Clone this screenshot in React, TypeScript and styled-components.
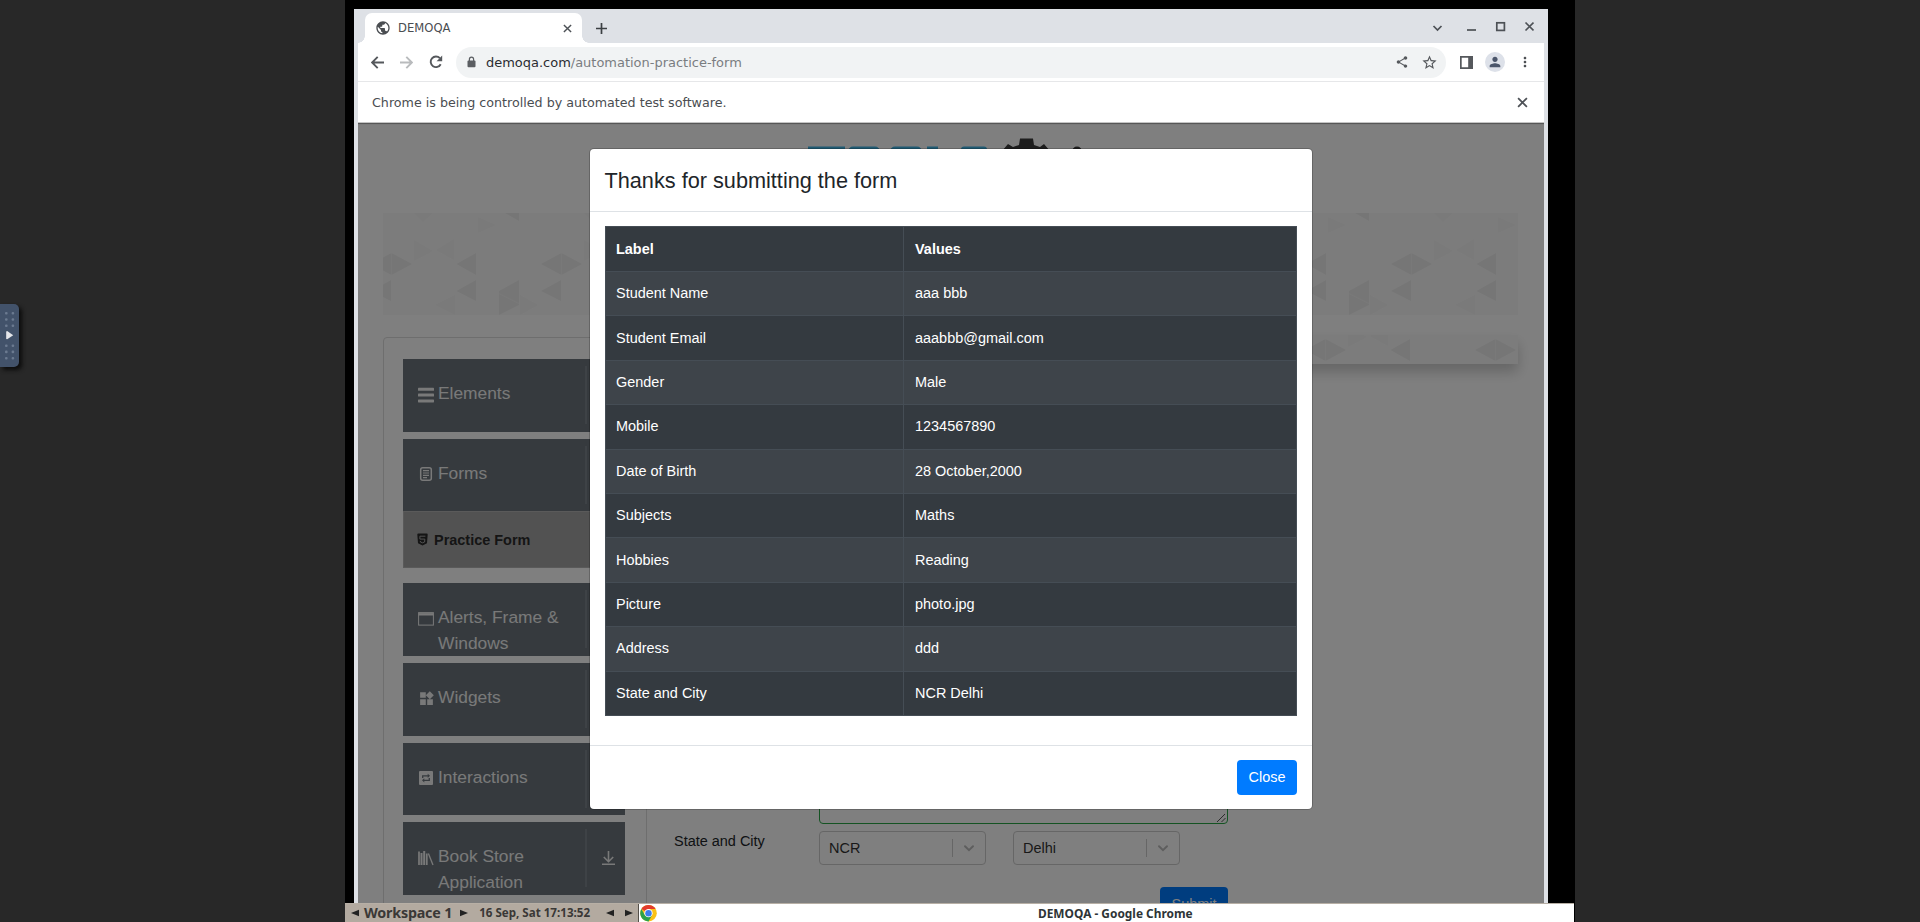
import React from "react";
import styled, { createGlobalStyle, css } from "styled-components";
import {
  MdShare,
  MdStarBorder,
  MdMoreVert,
  MdPerson,
  MdPublic,
  MdWidgets,
} from "react-icons/md";

const GlobalStyle = createGlobalStyle`
  *, *::before, *::after { box-sizing: border-box; }
  body { margin: 0; background: #282828; overflow: hidden; }
  svg { display: block; flex: none; }
`;

const sans = `"Liberation Sans", Arial, sans-serif`;
const uiSans = `"DejaVu Sans", sans-serif`;
const taskSans = `"Noto Sans", sans-serif`;

/* ---------- remote desktop frame ---------- */

const Viewer = styled.div`
  position: relative;
  width: 1920px;
  height: 922px;
  padding: 0 345px;
  background: #282828;
  overflow: hidden;
`;

const Desktop = styled.div`
  width: 1230px;
  height: 922px;
  background: #000;
  display: flex;
  flex-direction: column;
`;

const DockHandle = styled.div`
  position: absolute;
  left: 0;
  top: 304px;
  width: 19px;
  height: 63px;
  border-radius: 0 5px 5px 0;
  background: #42526a;
  box-shadow: 3px 3px 4px #0c0c0c;
`;

/* ---------- browser window ---------- */

const BrowserWindow = styled.div`
  width: 1194px;
  height: 894px;
  margin: 9px 0 0 9px;
  padding: 0 4px;
  background: #dee1e6;
  display: flex;
  flex-direction: column;
  color: #4a4d51;
`;

const TabStrip = styled.div`
  height: 34px;
  display: flex;
  align-items: flex-end;
  padding-left: 7px;
`;

const Tab = styled.div`
  position: relative;
  width: 217px;
  height: 30px;
  padding: 0 10px 0 10px;
  border-radius: 7px 7px 0 0;
  background: #fff;
  display: flex;
  align-items: center;
  gap: 7px;
  font: 11.6px ${uiSans};
  &::before,
  &::after {
    content: "";
    position: absolute;
    bottom: 0;
    width: 7px;
    height: 7px;
  }
  &::before {
    left: -7px;
    background: radial-gradient(circle at 0 0, transparent 6.5px, #fff 7px);
  }
  &::after {
    right: -7px;
    background: radial-gradient(circle at 100% 0, transparent 6.5px, #fff 7px);
  }
`;

const TabTitle = styled.span`
  flex: 1;
`;

const NewTab = styled.div`
  margin-left: 14px;
  height: 30px;
  display: flex;
  align-items: center;
  color: #3c4043;
`;

const WindowControls = styled.div`
  margin-left: auto;
  height: 34px;
  padding: 0 10px 0 0;
`;

const Toolbar = styled.div`
  height: 39px;
  padding: 0 11px 0 13px;
  background: #fff;
  border-bottom: 1px solid #e6e7e9;
  display: flex;
  align-items: center;
`;

const NavButton = styled.span<{ $muted?: boolean; $last?: boolean }>`
  width: ${(p) => (p.$last ? 27 : 29)}px;
  color: ${(p) => (p.$muted ? "#b9bbbd" : "#55585c")};
`;

const Omnibox = styled.div`
  width: 990px;
  height: 31px;
  padding: 0 8px 0 11px;
  border-radius: 16px;
  background: #f1f3f4;
  display: flex;
  align-items: center;
  font: 12.98px ${uiSans};
  color: #7a7d81;
`;

const Address = styled.span`
  flex: 1;
  margin-left: 10px;
  b {
    font-weight: 400;
    color: #2a2c30;
  }
`;

const ToolbarActions = styled.div`
  margin-left: auto;
  display: flex;
  align-items: center;
  gap: 12px;
`;

const Avatar = styled.span`
  width: 20px;
  height: 20px;
  border-radius: 50%;
  background: #dde1e9;
  color: #4b566b;
  display: flex;
  align-items: center;
  justify-content: center;
`;

const InfoBar = styled.div`
  height: 41px;
  padding: 0 16px 0 14px;
  background: #fff;
  border-bottom: 1px solid #c4c4c4;
  display: flex;
  align-items: center;
  justify-content: space-between;
  font: 12.68px ${uiSans};
`;

/* ---------- page ---------- */

const Page = styled.div`
  position: relative;
  flex: 1;
  overflow: hidden;
  background: #fff;
  font-family: ${sans};
  font-size: 14.46px;
  color: #212529;
`;

const Header = styled.div`
  height: 90px;
  padding: 15px 0 0 449px;
`;

const Banner = styled.div`
  width: 1135px;
  height: 102px;
  margin-left: 25px;
  background: #f9f9f9;
`;

const Columns = styled.div`
  display: flex;
  margin: 20px 0 0 25px;
`;

const Sidebar = styled.div`
  width: 264px;
  height: 640px;
  margin-top: 2px;
  padding: 21px 21px 0 19px;
  border: 1px solid #dcdcdc;
  border-radius: 4px;
`;

const Group = styled.div`
  height: 72.6px;
  margin-bottom: 7px;
  padding: 21px 0 0 15px;
  background: #6c757d;
  color: #f2f2f2;
  display: flex;
  font-size: 17.36px;
  line-height: 26px;
  overflow: hidden;
`;

const GroupIcon = styled.span`
  width: 20px;
  height: 29px;
  display: flex;
  align-items: center;
`;

const GroupLabel = styled.span`
  width: 147px;
`;

const GroupArrow = styled.span`
  width: 40px;
  height: 58px;
  margin: -14px 0 0;
  padding-left: 14px;
  border-left: 2px solid #7d858c;
  display: flex;
  align-items: center;
`;

const SubItem = styled.div`
  height: 57px;
  margin: -7px 0 15.3px;
  padding-left: 13px;
  background: #a5a5a5;
  border: 1px solid #b5b5b5;
  display: flex;
  align-items: center;
  gap: 6px;
  font-weight: 700;
  color: #2b2b2b;
`;

const Main = styled.div`
  flex: 1;
`;

const AdStrip = styled.div`
  width: 871px;
  height: 29px;
  background: #f9f9f9;
  box-shadow: 0 8px 13px rgba(0, 0, 0, 0.2);
  overflow: hidden;
`;

const Form = styled.div`
  padding: 0 0 0 27px;
  display: grid;
  grid-template-columns: 145px 409px;
`;

const AddressField = styled.div`
  grid-column: 2;
  height: 460px;
  border: 1px solid #28a745;
  border-radius: 4px;
  display: flex;
  align-items: flex-end;
  justify-content: flex-end;
  padding: 1px;
`;

const FieldLabel = styled.div`
  padding-top: 9px;
`;

const SelectRow = styled.div`
  display: flex;
  gap: 27px;
  padding-top: 7px;
`;

const Select = styled.div`
  width: 167px;
  height: 34px;
  padding: 0 9px;
  border: 1px solid #ccc;
  border-radius: 4px;
  display: flex;
  align-items: center;
  color: #333;
`;

const SelectValue = styled.span`
  flex: 1;
  padding-bottom: 1px;
`;

const SelectArrow = styled.span`
  height: 18px;
  padding-left: 9px;
  border-left: 1px solid #ccc;
  display: flex;
  align-items: center;
  color: #bdbdbd;
`;

const button = css`
  border: 0;
  border-radius: 4px;
  background: #007bff;
  color: #fff;
  font-family: ${sans};
  font-size: 14.46px;
  display: flex;
  align-items: center;
  justify-content: center;
`;

const Submit = styled.button`
  ${button}
  grid-column: 2;
  justify-self: end;
  width: 68px;
  height: 34px;
  margin-top: 22px;
`;

const Backdrop = styled.div`
  position: absolute;
  inset: 0;
  background: rgba(0, 0, 0, 0.5);
  padding: 26px 0 0 232px;
  box-shadow: inset 0 2px 1px -1px rgba(0, 0, 0, 0.35);
`;

/* ---------- confirmation dialog ---------- */

const Dialog = styled.div`
  width: 722px;
  height: 660px;
  border-radius: 4px;
  background: #fff;
  box-shadow: 0 0 0 1px rgba(0, 0, 0, 0.2);
  display: flex;
  flex-direction: column;
`;

const DialogTitle = styled.div`
  height: 63px;
  padding: 0 14.5px;
  border-bottom: 1px solid #dee2e6;
  font-size: 21.7px;
  line-height: 63px;
`;

const DialogBody = styled.div`
  flex: 1;
  padding: 14px 15px 0;
`;

const Table = styled.div`
  border: 1px solid #454d55;
  background: #343a40;
  color: #fff;
`;

const Row = styled.div<{ $head?: boolean; $striped?: boolean }>`
  display: grid;
  grid-template-columns: 298px 1fr;
  height: ${(p) => (p.$head ? "44px" : "44.4px")};
  background: ${(p) => (p.$striped ? "#3e444a" : "transparent")};
  font-weight: ${(p) => (p.$head ? 700 : 400)};
  border-top: ${(p) => (p.$head ? "0" : "1px solid #454d55")};
`;

const Cell = styled.div`
  padding: 0 10px 1px;
  display: flex;
  align-items: center;
  & + & {
    margin-left: -1px;
    padding-left: 11px;
    border-left: 1px solid #454d55;
  }
`;

const DialogFooter = styled.div`
  height: 64px;
  padding: 14px 15px 0;
  border-top: 1px solid #dee2e6;
  display: flex;
  justify-content: flex-end;
`;

const CloseButton = styled.button`
  ${button}
  width: 60px;
  height: 35px;
  padding: 0 0 2px;
`;

/* ---------- task bar ---------- */

const TaskBar = styled.div`
  width: 1229px;
  height: 19px;
  background: #fff;
  border-top: 1px solid #b7afa5;
  display: flex;
  font: 700 12px/18px ${taskSans};
  color: #2e3436;
`;

const Pager = styled.div`
  width: 294px;
  height: 18px;
  padding: 0 5px 0 6px;
  background: #b3aaa0;
  border-right: 1px solid #55504a;
  display: flex;
  align-items: center;
  color: #3a3836;
`;

const Workspace = styled.span`
  width: 89px;
  margin: 0 8px 0 5px;
  font-size: 14.3px;
  white-space: nowrap;
  letter-spacing: -0.2px;
`;

const Clock = styled.span`
  width: 116px;
  margin: 0 15px 0 11px;
  font-size: 11.6px;
  white-space: nowrap;
`;

const NextGap = styled.span`
  width: 11px;
`;

const TaskTitle = styled.div`
  flex: 1;
  padding-left: 380px;
  font-size: 11.9px;
  white-space: nowrap;
`;

/* ---------- drawings ---------- */

const Arrow = ({ left }: { left?: boolean }) => (
  <svg width="8" height="8" viewBox="0 0 8 8">
    <path d={left ? "M8 .8v6.4L0 4z" : "M0 .8v6.4L8 4z"} fill="#222" />
  </svg>
);

const ChromeLogo = () => (
  <svg width="19" height="18" viewBox="-1.500 -1.500 51 50">
    <circle cx="24" cy="24" r="23" fill="#fbc116" />
    <path d="M24 24 4.1 12.5A23 23 0 0 1 43.9 12.5H24z" fill="#e33b2e" />
    <path d="M4.1 12.5 14 29.8 24 35.5 24 47A23 23 0 0 1 4.1 12.5z" fill="#2aa14c" />
    <path d="M34 29.8 24 47l-6-8 6-6z" fill="#2aa14c" />
    <circle cx="24" cy="24" r="11.5" fill="#fff" />
    <circle cx="24" cy="24" r="9" fill="#3b7ded" />
  </svg>
);

const NavArrow = ({ forward }: { forward?: boolean }) => (
  <svg width="13" height="13" viewBox="0 0 13 13" fill="none" stroke="currentColor" strokeWidth="1.900">
    <path d={forward ? "M0 6.500h11.500M6.300.9l5.600 5.600-5.600 5.600" : "M13 6.500H1.500M6.700.9L1.100 6.500l5.600 5.600"} />
  </svg>
);

const ReloadIcon = () => (
  <svg width="14" height="14" viewBox="0 0 14 14">
    <path d="M11.700 9.200A5.300 5.300 0 1 1 10.900 3.200" fill="none" stroke="currentColor" strokeWidth="1.900" />
    <path d="M13.200.6v5.600H7.600z" fill="currentColor" />
  </svg>
);

const Cross = ({ size }: { size: number }) => (
  <svg width={size} height={size} viewBox="0 0 10 10" stroke="#4d5156" strokeWidth="1.600">
    <path d="M1 1l8 8M9 1L1 9" />
  </svg>
);

const Plus = () => (
  <svg width="11" height="11" viewBox="0 0 11 11" stroke="currentColor" strokeWidth="1.700">
    <path d="M5.500 0v11M0 5.500h11" />
  </svg>
);

const LockIcon = () => (
  <svg width="9" height="12" viewBox="0 0 9 12">
    <rect x=".5" y="4.500" width="8" height="6.800" rx="1" fill="#5b5e62" />
    <path d="M2.400 5V3.200a2.100 2.100 0 0 1 4.200 0V5" fill="none" stroke="#5b5e62" strokeWidth="1.200" />
  </svg>
);

const WindowButtons = () => (
  <svg width="105" height="34" viewBox="0 0 105 34" fill="none" stroke="#4d5156" strokeWidth="1.7">
    <path d="M4.5 17l4 4 4-4" />
    <path d="M38 21h9" />
    <rect x="67.8" y="13.8" width="7.6" height="7.6" />
    <path d="M96.5 13.5l8 8M104.5 13.5l-8 8" />
  </svg>
);

const SidePanelIcon = () => (
  <svg width="13" height="13" viewBox="0 0 13 13">
    <path d="M0 0h13v13H0zM1.7 1.7v9.6h6.5V1.7z" fill="#55585c" fillRule="evenodd" />
  </svg>
);

const DockDots = () => (
  <svg width="19" height="63" viewBox="0 0 19 63">
    {[9, 15.2, 21.4, 41.4, 47.6, 54].map((y) => (
      <g key={y} fill="#6b7a90">
        <rect x="5" y={y - 1} width="2.6" height="2.6" rx="1" />
        <rect x="11.6" y={y - 1} width="2.6" height="2.6" rx="1" />
      </g>
    ))}
    <path d="M6.2 27.5v7.400l1 .4 6-4.100-6-4.100z" fill="#e4e6ea" />
  </svg>
);

const Logo = () => (
  <svg width="310" height="60" viewBox="0 0 310 60">
    <g fill="#40b4e5">
      <rect x="1" y="8.5" width="37" height="8" />
      <rect x="41" y="8.5" width="32" height="14" rx="5" />
      <rect x="83" y="8.5" width="32" height="14" rx="5" />
      <rect x="120" y="8.5" width="11" height="14" />
      <rect x="154" y="8.5" width="26" height="14" rx="3" />
    </g>
    <path d="M195 13l6-7 5 3 6-2 1-6.500h13l1 6.500 6 2 4-3 6 7v10h-48z" fill="#3a3a3a" />
    <circle cx="270" cy="13.500" r="5" fill="#3a3a3a" />
  </svg>
);

const Triangles = ({ id, width, height, dx, dy }: { id: string; width: number; height: number; dx: number; dy: number }) => (
  <svg width={width} height={height}>
    <defs>
      <pattern id={id} width="170" height="128" patternUnits="userSpaceOnUse" patternTransform={`translate(${dx} ${dy})`}>
        <g fill="#f5f5f5">
          <path d="M31 27v21l19-10zM71 26v21l-18-10zM72 82v20L52 92zM137 82v20l18-10zM95 4v16l18-8zM31 0h19L40 9z" />
        </g>
        <g fill="#ededed">
          <path d="M-12 51L8.500 40v22zM8.500 40L29 51 8.500 62zM158 51l20.500-11v22zM73.500 51L93 40v22zM73.500 78L93 67v21zM-12 78L8 67v21zM158 78l20-11v21zM116 78l20-11v25l-20 10zM122 0h14v8z" />
        </g>
        <path d="M116 80.500l20 10M8.500 0v128M93.500 0v128" stroke="#f7f7f7" strokeWidth=".6" fill="none" />
      </pattern>
    </defs>
    <rect width={width} height={height} fill={`url(#${id})`} />
  </svg>
);

const BarsIcon = () => (
  <svg width="16" height="16" viewBox="0 0 16 16" fill="currentColor">
    <rect y=".8" width="16" height="3" rx=".6" />
    <rect y="6.600" width="16" height="3" rx=".6" />
    <rect y="12.400" width="16" height="3" rx=".6" />
  </svg>
);

const FormIcon = () => (
  <svg width="16" height="16" viewBox="0 0 16 16" fill="none" stroke="currentColor">
    <rect x="2.700" y="1.700" width="10.600" height="12.600" rx="2" strokeWidth="1.500" />
    <path d="M5 4.700h6M5 7h6M5 9.300h6M5 11.600h4" strokeWidth="1.200" />
  </svg>
);

const WindowIcon = () => (
  <svg width="16" height="16" viewBox="0 0 16 16" fill="none" stroke="currentColor">
    <rect x=".6" y="1.600" width="14.800" height="12.500" />
    <path d="M.6 3.300h14.800" strokeWidth="2.400" />
  </svg>
);

const RepeatIcon = () => (
  <svg width="16" height="16" viewBox="0 0 16 16">
    <rect x="1" y="1" width="14" height="14" rx="1" fill="currentColor" />
    <path d="M4.700 8V5.800h5.500M11.300 8v2.300H5.800" fill="none" stroke="#6c757d" strokeWidth="1.300" />
    <path d="M9.700 3.700l2.300 2.100-2.300 2.100zM6.300 8.200L4 10.300l2.300 2.100z" fill="#6c757d" />
  </svg>
);

const BooksIcon = () => (
  <svg width="16" height="16" viewBox="0 0 16 16" fill="none" stroke="currentColor">
    <path d="M1 1.500V15M8.800 3.500V15" strokeWidth="1.700" />
    <path d="M3.500 3V15M6.200 1V15" strokeWidth="2" />
    <path d="M10.400 3.500L15 15" strokeWidth="1.300" />
  </svg>
);

const ShieldIcon = () => (
  <svg width="11" height="13" viewBox="0 0 11 13">
    <path d="M1.200.6h8.600q1 0 .9 1L10 10.300 5.500 12.500 1 10.300.3 1.600q0-1 .9-1z" fill="currentColor" />
    <path d="M8.400 3.200H2.900v2.900h4.900L7.600 9l-2.100.8L3.400 9V8" fill="none" stroke="#a5a5a5" />
  </svg>
);

const DownloadIcon = () => (
  <svg width="15" height="16" viewBox="0 0 15 16" fill="none" stroke="currentColor" strokeWidth="1.600">
    <path d="M7.500 1v10.500M2.800 7l4.700 4.700L12.200 7M1 14.300h13" />
  </svg>
);

const Chevron = () => (
  <svg width="14" height="14" viewBox="0 0 14 14" fill="none" stroke="currentColor" strokeWidth="2" strokeLinecap="round">
    <path d="M3 5.200l4 4 4-4" />
  </svg>
);

const ResizeGrip = () => (
  <svg width="9" height="9" viewBox="0 0 9 9" stroke="#444" strokeWidth=".9">
    <path d="M0 9l8-8M4.500 9L8.500 5" />
  </svg>
);

/* ---------- data ---------- */

const submitted: [string, string][] = [
  ["Student Name", "aaa bbb"],
  ["Student Email", "aaabbb@gmail.com"],
  ["Gender", "Male"],
  ["Mobile", "1234567890"],
  ["Date of Birth", "28 October,2000"],
  ["Subjects", "Maths"],
  ["Hobbies", "Reading"],
  ["Picture", "photo.jpg"],
  ["Address", "ddd"],
  ["State and City", "NCR Delhi"],
];

const groups: { label: string; icon: React.ReactNode; child?: string }[] = [
  { label: "Elements", icon: <BarsIcon /> },
  { label: "Forms", icon: <FormIcon />, child: "Practice Form" },
  { label: "Alerts, Frame & Windows", icon: <WindowIcon /> },
  { label: "Widgets", icon: <MdWidgets size={17} /> },
  { label: "Interactions", icon: <RepeatIcon /> },
  { label: "Book Store Application", icon: <BooksIcon /> },
];

export default function App() {
  return (
    <Viewer>
      <GlobalStyle />
      <Desktop>
        <BrowserWindow>
          <TabStrip>
            <Tab>
              <MdPublic size={16} />
              <TabTitle>DEMOQA</TabTitle>
              <Cross size={9} />
            </Tab>
            <NewTab>
              <Plus />
            </NewTab>
            <WindowControls>
              <WindowButtons />
            </WindowControls>
          </TabStrip>
          <Toolbar>
            <NavButton><NavArrow /></NavButton>
            <NavButton $muted><NavArrow forward /></NavButton>
            <NavButton $last><ReloadIcon /></NavButton>
            <Omnibox>
              <LockIcon />
              <Address><b>demoqa.com</b>/automation-practice-form</Address>
              <ToolbarActions>
                <MdShare size={14} color="#55585c" />
                <MdStarBorder size={17} color="#55585c" />
              </ToolbarActions>
            </Omnibox>
            <ToolbarActions>
              <SidePanelIcon />
              <Avatar><MdPerson size={16} /></Avatar>
              <MdMoreVert size={16} />
            </ToolbarActions>
          </Toolbar>
          <InfoBar>
            Chrome is being controlled by automated test software.
            <Cross size={11} />
          </InfoBar>
          <Page>
            <Header><Logo /></Header>
            <Banner><Triangles id="banner" width={1135} height={102} dx={0} dy={0} /></Banner>
            <Columns>
              <Sidebar>
                {groups.map((g) => (
                  <React.Fragment key={g.label}>
                    <Group>
                      <GroupIcon>{g.icon}</GroupIcon>
                      <GroupLabel>{g.label}</GroupLabel>
                      <GroupArrow><DownloadIcon /></GroupArrow>
                    </Group>
                    {g.child && <SubItem><ShieldIcon />{g.child}</SubItem>}
                  </React.Fragment>
                ))}
              </Sidebar>
              <Main>
                <AdStrip><Triangles id="strip" width={871} height={29} dx={-10} dy={-36} /></AdStrip>
                <Form>
                  <AddressField><ResizeGrip /></AddressField>
                  <FieldLabel>State and City</FieldLabel>
                  <SelectRow>
                    {["NCR", "Delhi"].map((v) => (
                      <Select key={v}>
                        <SelectValue>{v}</SelectValue>
                        <SelectArrow><Chevron /></SelectArrow>
                      </Select>
                    ))}
                  </SelectRow>
                  <Submit>Submit</Submit>
                </Form>
              </Main>
            </Columns>
            <Backdrop>
              <Dialog>
                <DialogTitle>Thanks for submitting the form</DialogTitle>
                <DialogBody>
                  <Table>
                    <Row $head><Cell>Label</Cell><Cell>Values</Cell></Row>
                    {submitted.map(([label, value], i) => (
                      <Row key={label} $striped={i % 2 === 0}>
                        <Cell>{label}</Cell>
                        <Cell>{value}</Cell>
                      </Row>
                    ))}
                  </Table>
                </DialogBody>
                <DialogFooter><CloseButton>Close</CloseButton></DialogFooter>
              </Dialog>
            </Backdrop>
          </Page>
        </BrowserWindow>
        <TaskBar>
          <Pager>
            <Arrow left />
            <Workspace>Workspace 1</Workspace>
            <Arrow />
            <Clock>16 Sep, Sat 17:13:52</Clock>
            <Arrow left />
            <NextGap />
            <Arrow />
          </Pager>
          <ChromeLogo />
          <TaskTitle>DEMOQA - Google Chrome</TaskTitle>
        </TaskBar>
      </Desktop>
      <DockHandle><DockDots /></DockHandle>
    </Viewer>
  );
}
